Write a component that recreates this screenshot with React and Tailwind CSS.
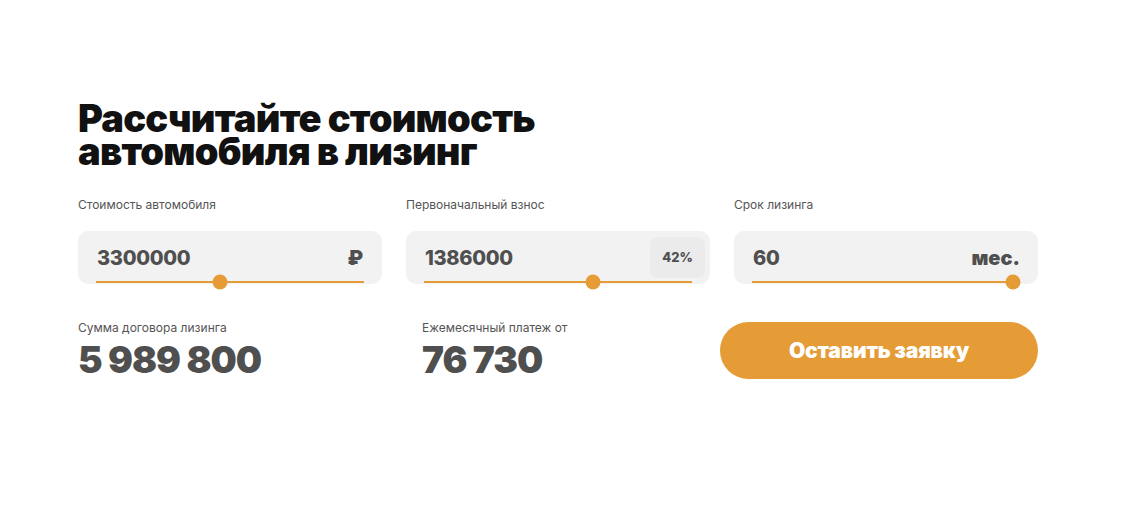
import React from "react";

function Slider({ percent }) {
  return (
    <div className="absolute left-[18px] right-[18px] bottom-[1px] h-[2px] bg-[#e59c37]">
      <div
        className="absolute top-1/2 w-[15px] h-[15px] -translate-x-1/2 -translate-y-1/2 rounded-full bg-[#e59c37]"
        style={{ left: `calc(${percent}% + ${7.5 - 0.15 * percent}px)` }}
      />
    </div>
  );
}

function Field({ label, value, suffix, percent }) {
  return (
    <div className="flex flex-col">
      <div className="text-[12px] leading-[14px] text-[#555] mb-[19px]">{label}</div>
      <div className="relative h-[53px] rounded-[10px] bg-[#f2f2f2] flex items-center justify-between pl-[19px] pr-[18px]">
        <span className="text-[20px] font-extrabold text-[#4f4f4f] tracking-[-0.3px]">{value}</span>
        {suffix}
        <Slider percent={percent} />
      </div>
    </div>
  );
}

export default function App() {
  return (
    <div
      className="w-[1130px] h-[512px] bg-white pt-[102px] pl-[78px]"
      style={{ fontFamily: "Inter, 'Noto Sans', sans-serif" }}
    >
      <h1 className="text-[38px] font-black text-[#111] tracking-[-0.75px]">
        <div className="h-[33px] leading-[33px]">Рассчитайте стоимость</div>
        <div className="h-[33px] leading-[33px]">автомобиля в лизинг</div>
      </h1>

      <div className="grid grid-cols-[304px_304px_304px] gap-x-[24px] mt-[30px]">
        <Field
          label="Стоимость автомобиля"
          value="3300000"
          percent={46}
          suffix={<span className="text-[20px] font-black text-[#4f4f4f] mr-[1px]">₽</span>}
        />
        <Field
          label="Первоначальный взнос"
          value="1386000"
          percent={64}
          suffix={
            <span className="flex items-center justify-center w-[55px] h-[41px] -mr-[13px] rounded-[8px] bg-[#ebebeb] text-[13px] font-extrabold text-[#4f4f4f]">
              42%
            </span>
          }
        />
        <Field
          label="Срок лизинга"
          value="60"
          percent={100}
          suffix={<span className="text-[20px] font-black text-[#4f4f4f]">мес.</span>}
        />
      </div>

      <div className="grid grid-cols-[344px_298px_318px] items-center mt-[37px]">
        <div>
          <div className="text-[12px] leading-[14px] text-[#555]">Сумма договора лизинга</div>
          <div className="text-[37px] leading-[40px] font-black text-[#4f4f4f] mt-[5px] tracking-[-1px]">
            5 989 800
          </div>
        </div>
        <div>
          <div className="text-[12px] leading-[14px] text-[#555]">Ежемесячный платеж от</div>
          <div className="text-[37px] leading-[40px] font-black text-[#4f4f4f] mt-[5px] tracking-[-1px]">
            76 730
          </div>
        </div>
        <button className="h-[57px] rounded-full bg-[#e59c37] text-white text-[21px] font-black tracking-[-0.15px]">
          Оставить заявку
        </button>
      </div>
    </div>
  );
}
